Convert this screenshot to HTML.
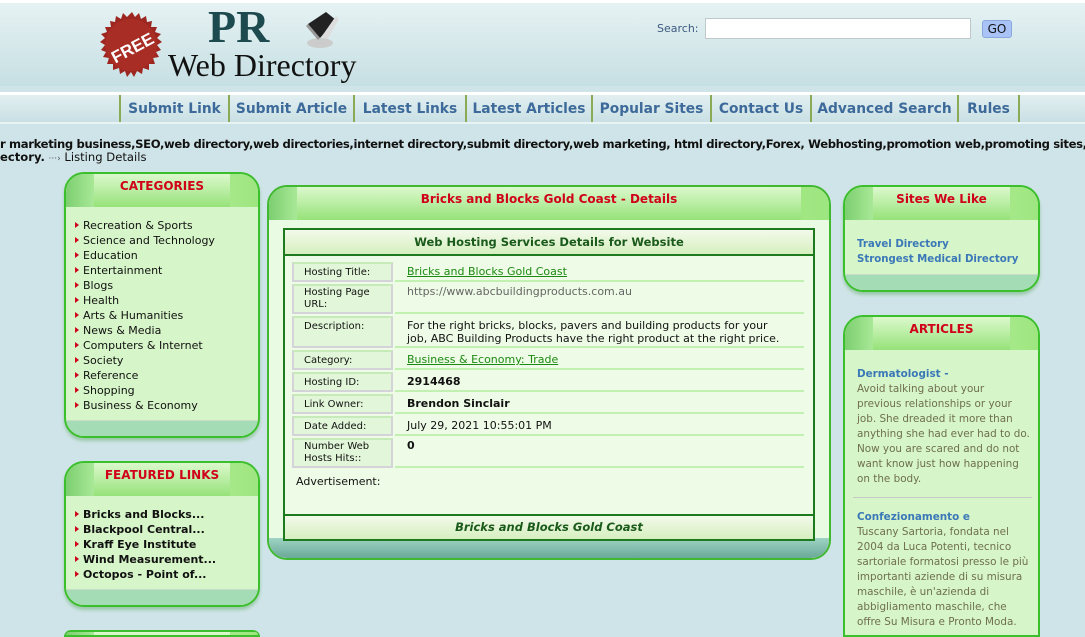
<!DOCTYPE html>
<html><head><meta charset="utf-8"><style>
*{margin:0;padding:0;box-sizing:border-box}
html{overflow:hidden;width:1085px;height:637px}
body{width:1085px;height:637px;overflow:hidden;background:#cfe4e8;font-family:"DejaVu Sans",Verdana,sans-serif;font-size:11px;position:relative;color:#111}
.abs{position:absolute}
#hdr{left:0;top:0;width:1085px;height:86px;background:linear-gradient(#e6f2f3,#c6dfe3);border-top:3px solid #fff}
#nav{left:0;top:92px;width:1085px;height:32px;background:linear-gradient(#e2eff1,#c9e0e4);border-top:3px solid #fff;border-bottom:2px solid #e8f3f4}
#nav a{position:absolute;top:0;height:27px;line-height:29px;font-weight:bold;font-size:13.8px;color:#3d6a9a;text-decoration:none;border-left:2px solid #8aaa55;text-align:center}
.panel{position:absolute;border:2px solid #3cbf2c;border-radius:20px;background:#d6f5c8;overflow:hidden;box-shadow:0 3px 3px #9bc9a9}
.ph{height:33px;background:linear-gradient(90deg,#7dcf70 0,#a8e897 28px,#c9f5b5 28px,#9ee680 100%);position:relative}
.ph:before{content:"";position:absolute;inset:0 28px 0 28px;background:linear-gradient(#dcf9cd,#96e279)}
.ph span{position:relative;display:block;text-align:center;color:#d0021b;font-weight:bold;font-size:12px;line-height:24px}
.pf{position:absolute;left:0;right:0;bottom:0;height:16px;background:#a3dcb5;border-top:1px solid #c8dcc8}
ul{list-style:none}
.cat li{padding-left:17px;position:relative;line-height:15px;font-size:11px;color:#111}
.cat li:before{content:"";position:absolute;left:9px;top:4px;border-left:4px solid #d0021b;border-top:3.5px solid transparent;border-bottom:3.5px solid transparent}
.feat li{font-weight:bold}
td{vertical-align:top}
.lbl{background:#e2f7d9;border:2px solid #d3d3d8;border-top-color:#c6ebb9;padding:1px 10px;font-size:10px;width:101px;line-height:12px}
.val{padding:1px 12px;border-bottom:2px solid #c2f0b0;font-size:11px;line-height:13px}
a.g{color:#1c8a12;text-decoration:underline}
.art{color:#6f6f50;font-size:10.4px;line-height:15px;white-space:nowrap}
.art b{color:#3b78b8}
</style></head><body>
<div id="hdr" class="abs"></div>
<svg class="abs" style="left:94px;top:10px" width="76" height="72" viewBox="0 0 76 72">
<polygon fill="#9d2620" points="38,2 41,7 45,3 47,9 52,6 53,12 58,11 57,17 63,17 61,22 67,24 63,28 68,32 63,35 67,40 62,42 65,47 59,48 61,54 55,54 55,60 49,58 48,64 43,61 40,67 37,62 33,67 31,61 26,64 25,58 19,60 19,54 13,54 15,48 9,47 12,42 7,40 11,35 6,32 11,28 7,24 13,22 11,17 17,17 16,11 21,12 22,6 27,9 29,3 33,7"/>
<circle cx="37" cy="35" r="26" fill="#a82d24"/>
<text x="37" y="44" fill="#fff" font-family="Liberation Sans" font-weight="bold" font-size="17" text-anchor="middle" transform="rotate(-28 37 35)">FREE</text>
</svg>
<div class="abs" style="left:208px;top:2px;font-family:'Liberation Serif',serif;font-size:46px;font-weight:bold;color:#1d4a4e;line-height:50px">PR</div>
<svg class="abs" style="left:296px;top:8px" width="44" height="42"><polygon points="12,16 30,4 40,12 24,30" fill="#222"/><polygon points="26,28 40,8 43,11 30,34" fill="#ddd"/><ellipse cx="24" cy="35" rx="13" ry="5" fill="#ccc"/><polygon points="12,16 24,30 22,32 10,18" fill="#999"/></svg>
<div class="abs" style="left:168px;top:46px;font-family:'Liberation Serif',serif;font-size:32px;color:#111;line-height:38px">Web Directory</div>
<div class="abs" style="left:657px;top:22px;color:#3d5a80;font-size:11px">Search:</div>
<div class="abs" style="left:705px;top:18px;width:266px;height:21px;background:#fff;border:1px solid #bfc9cc"></div>
<div class="abs" style="left:982px;top:20px;width:30px;height:18px;background:#a9c3f7;border:1px solid #8aa8e0;border-radius:3px;text-align:center;font-size:12px;line-height:17px">GO</div>
<div id="nav" class="abs">
<a style="left:119px;width:109px">Submit Link</a>
<a style="left:228px;width:125px">Submit Article</a>
<a style="left:353px;width:112px">Latest Links</a>
<a style="left:465px;width:126px">Latest Articles</a>
<a style="left:591px;width:119px">Popular Sites</a>
<a style="left:710px;width:100px">Contact Us</a>
<a style="left:810px;width:147px">Advanced Search</a>
<a style="left:957px;width:63px;border-right:2px solid #8aaa55">Rules</a>
</div>
<div class="abs" style="left:0;top:137px;white-space:nowrap;font-weight:bold;font-size:11.6px;letter-spacing:-0.35px">r marketing business,SEO,web directory,web directories,internet directory,submit directory,web marketing, html directory,Forex, Webhosting,promotion web,promoting sites,i</div>
<div class="abs" style="left:0;top:150px;white-space:nowrap;font-size:11.6px"><b>ectory.</b> <span style="color:#555;font-size:9px">···›</span> Listing Details</div>

<div class="panel" style="left:64px;top:172px;width:196px;height:266px"><div class="ph"><span>CATEGORIES</span></div>
<ul class="cat" style="margin-top:11px"><li>Recreation &amp; Sports</li><li>Science and Technology</li><li>Education</li><li>Entertainment</li><li>Blogs</li><li>Health</li><li>Arts &amp; Humanities</li><li>News &amp; Media</li><li>Computers &amp; Internet</li><li>Society</li><li>Reference</li><li>Shopping</li><li>Business &amp; Economy</li></ul><div class="pf"></div></div>
<div class="panel" style="left:64px;top:461px;width:196px;height:146px"><div class="ph"><span>FEATURED LINKS</span></div>
<ul class="cat feat" style="margin-top:11px"><li>Bricks and Blocks...</li><li>Blackpool Central...</li><li>Kraff Eye Institute</li><li>Wind Measurement...</li><li>Octopos - Point of...</li></ul><div class="pf"></div></div>
<div class="panel" style="left:64px;top:630px;width:196px;height:7px;border-radius:20px 20px 0 0;box-shadow:none"><div class="ph"></div></div>

<div class="panel" style="left:267px;top:185px;width:564px;height:375px;background:#eafbe3;box-shadow:none;border-color:#40b830"><div class="ph"><span style="line-height:24px">Bricks and Blocks Gold Coast - Details</span></div>
<div class="pf" style="height:20px;background:linear-gradient(#9fd3c3,#6aa999);border:none"></div></div>
<div class="abs" style="left:283px;top:228px;width:532px;height:313px;border:2px solid #1d7a1d;background:#eefbe6">
<div style="height:26px;background:linear-gradient(#f2faea,#d6efbf);border-bottom:2px solid #1d7a1d;text-align:center;font-weight:bold;color:#1a5a1a;font-size:11.5px;line-height:24px">Web Hosting Services Details for Website</div>
<table style="margin:4px 0 0 5px;border-collapse:separate;border-spacing:2px;width:516px">
<tr><td class="lbl" style="height:20px;padding-top:3px">Hosting Title:</td><td class="val" style="padding-top:3px"><a class="g">Bricks and Blocks Gold Coast</a></td></tr>
<tr><td class="lbl" style="height:26px">Hosting Page URL:</td><td class="val" style="color:#666">https://www.abcbuildingproducts.com.au</td></tr>
<tr><td class="lbl" style="height:30px;padding-top:3px">Description:</td><td class="val" style="white-space:nowrap;padding-top:3px">For the right bricks, blocks, pavers and building products for your<br>job, ABC Building Products have the right product at the right price.</td></tr>
<tr><td class="lbl" style="height:20px;padding-top:3px">Category:</td><td class="val" style="padding-top:3px"><a class="g">Business &amp; Economy: Trade</a></td></tr>
<tr><td class="lbl" style="height:20px;padding-top:3px">Hosting ID:</td><td class="val" style="padding-top:3px"><b>2914468</b></td></tr>
<tr><td class="lbl" style="height:20px;padding-top:3px">Link Owner:</td><td class="val" style="padding-top:3px"><b>Brendon Sinclair</b></td></tr>
<tr><td class="lbl" style="height:20px;padding-top:3px">Date Added:</td><td class="val" style="padding-top:3px">July 29, 2021 10:55:01 PM</td></tr>
<tr><td class="lbl" style="height:28px">Number Web Hosts Hits::</td><td class="val"><b>0</b></td></tr>
</table>
<div style="margin:5px 0 0 11px">Advertisement:</div>
<div class="abs" style="left:0;right:0;bottom:0;height:25px;border-top:2px solid #1d7a1d;background:linear-gradient(#f2faea,#d6efbf);text-align:center;font-weight:bold;font-style:italic;color:#1a5a1a;font-size:11.5px;line-height:22px">Bricks and Blocks Gold Coast</div>
</div>

<div class="panel" style="left:843px;top:185px;width:197px;height:107px"><div class="ph"><span>Sites We Like</span></div>
<div style="margin:17px 0 0 12px;font-weight:bold;color:#3b78b8;font-size:10.2px;line-height:15px">Travel Directory<br>Strongest Medical Directory</div><div class="pf"></div></div>
<div class="panel" style="left:843px;top:315px;width:197px;height:322px;border-radius:20px 20px 0 0;box-shadow:none"><div class="ph"><span>ARTICLES</span></div>
<div class="art" style="margin:17px 8px 0 12px">
<b>Dermatologist -</b><br>Avoid talking about your<br>previous relationships or your<br>job. She dreaded it more than<br>anything she had ever had to do.<br>Now you are scared and do not<br>want know just how happening<br>on the body.
<div style="border-top:1px solid #c8c8c8;margin:10px -2px 12px -4px"></div>
<b>Confezionamento e</b><br>Tuscany Sartoria, fondata nel<br>2004 da Luca Potenti, tecnico<br>sartoriale formatosi presso le più<br>importanti aziende di su misura<br>maschile, è un'azienda di<br>abbigliamento maschile, che<br>offre Su Misura e Pronto Moda.</div></div>
</body></html>
